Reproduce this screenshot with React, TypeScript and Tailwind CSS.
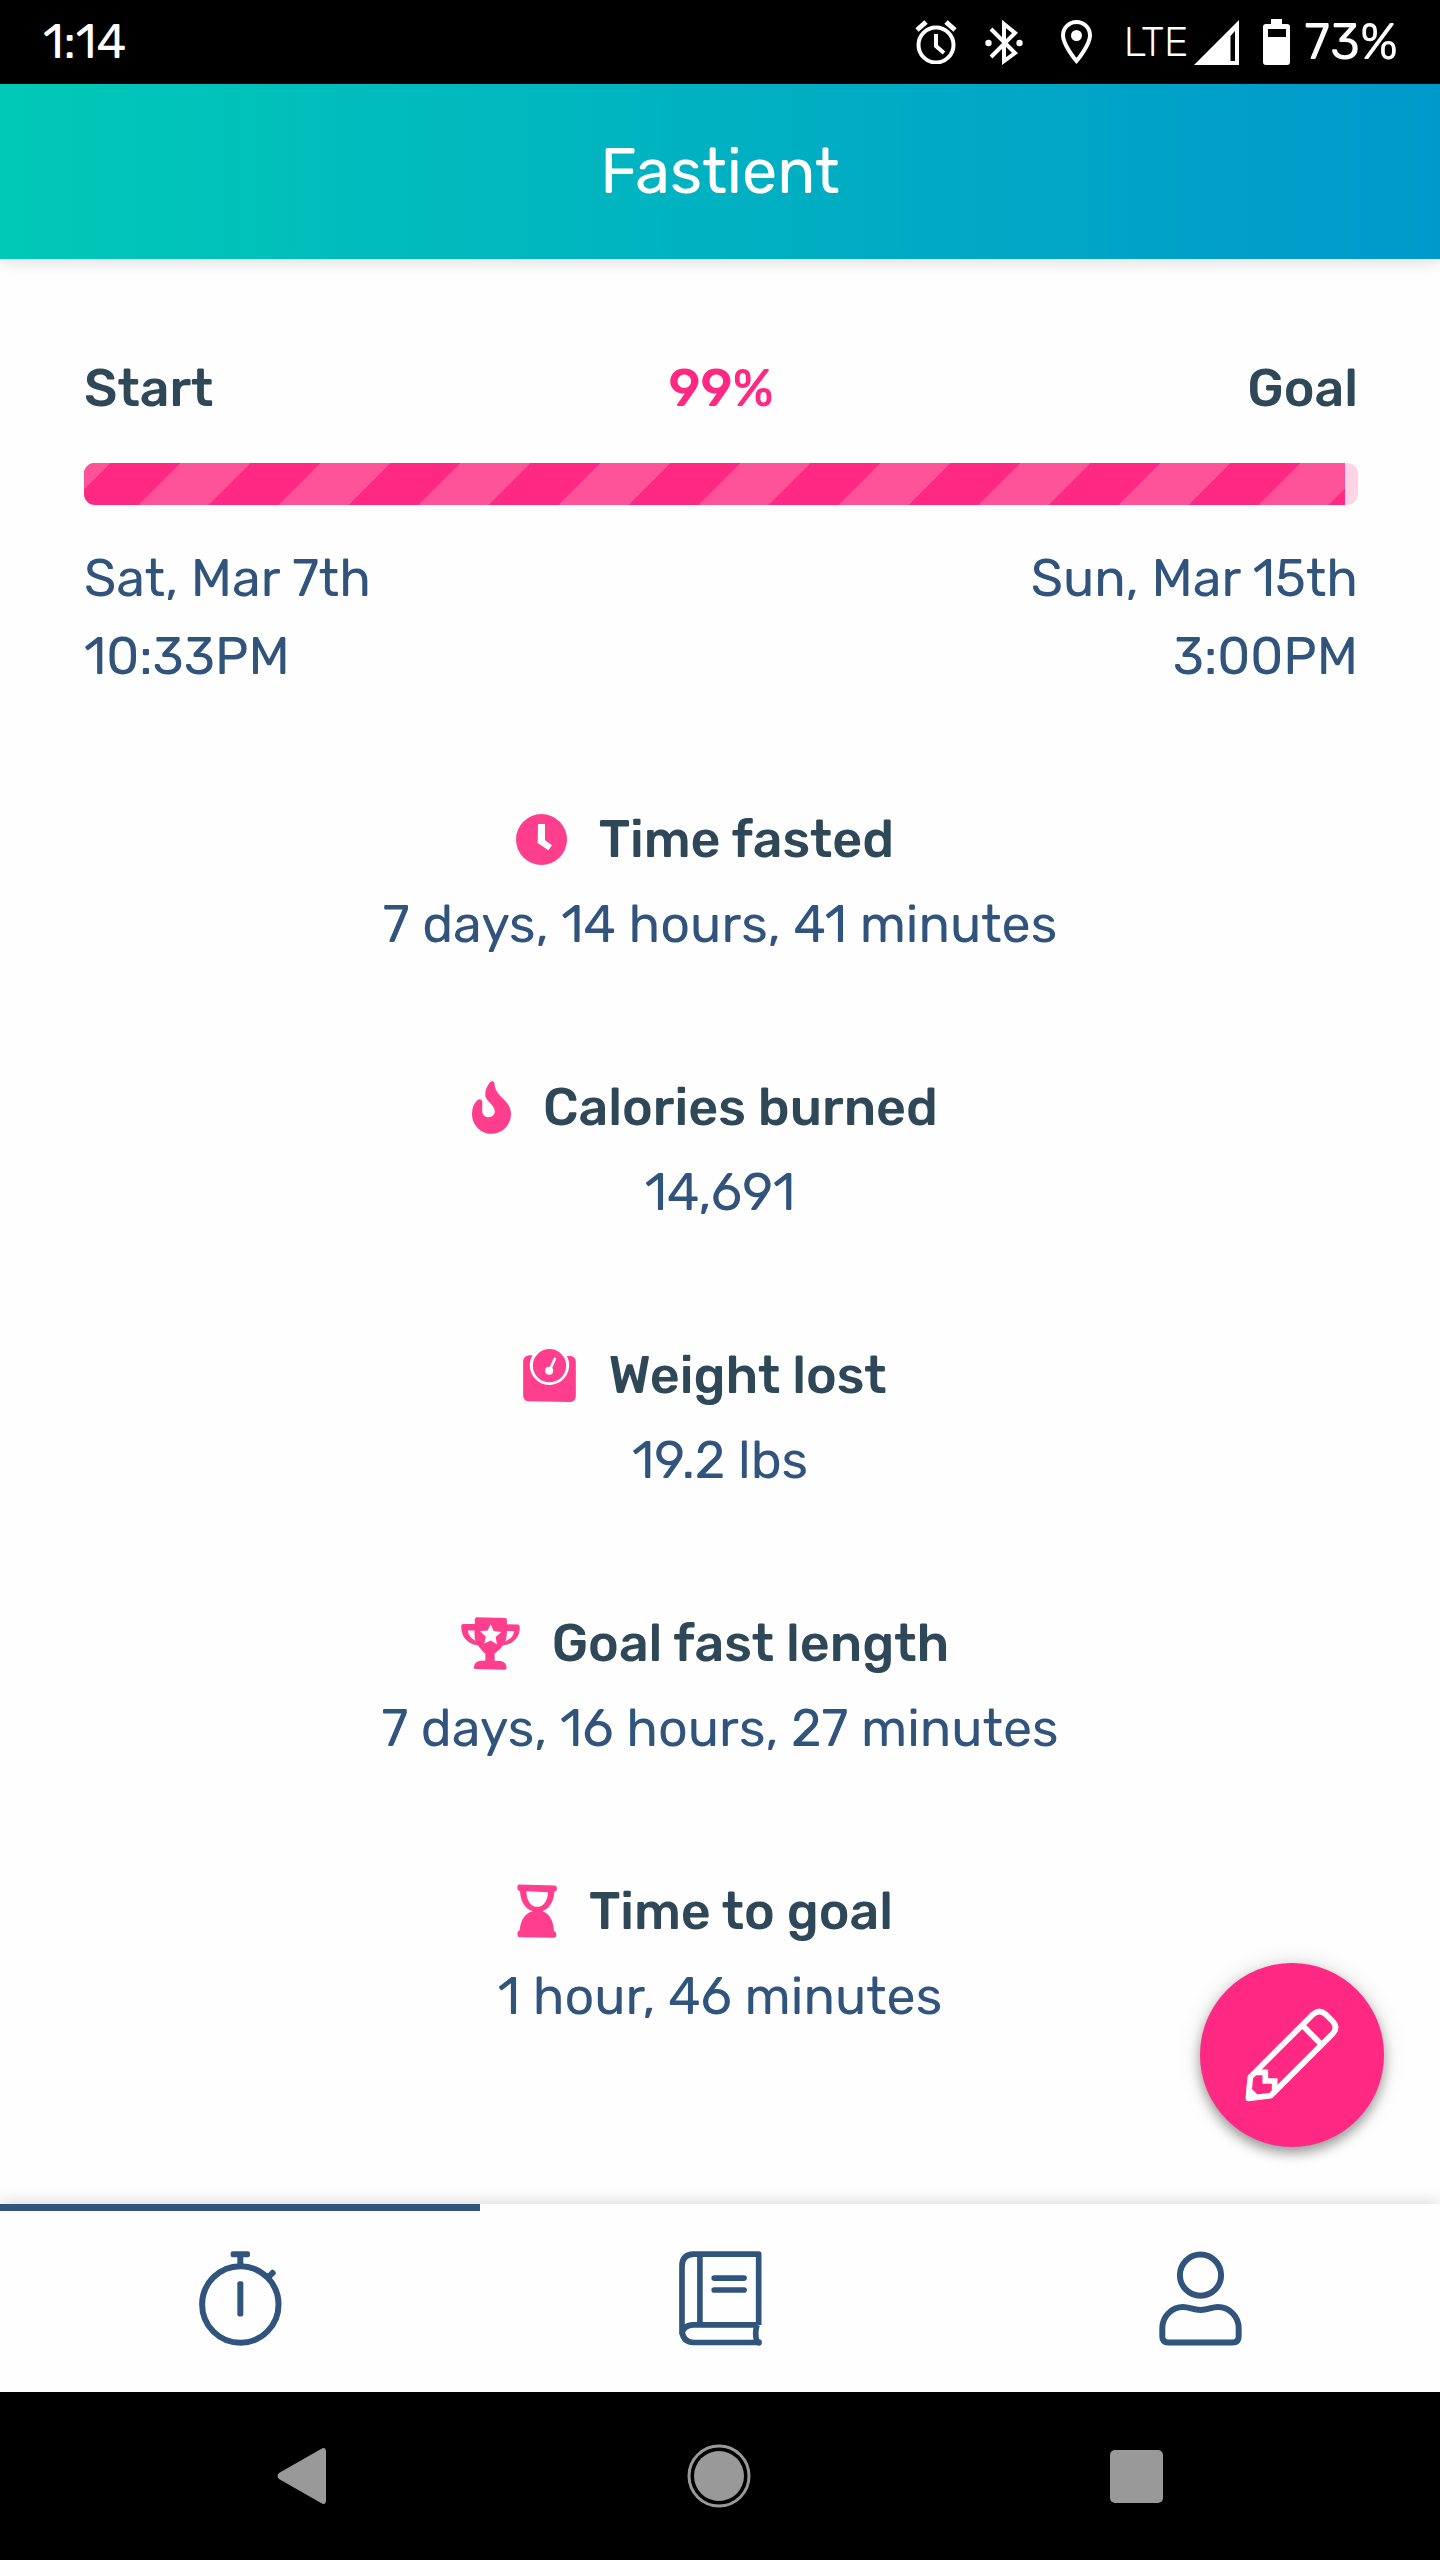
import type { ReactNode } from "react";

function StatusBar() {
  return (
    <div className="flex h-[84px] items-center bg-black pr-[42px] pl-[43px] text-white">
      <time className="flex-1 text-[48px] leading-[60px]">1:14</time>
      <svg className="h-[44px] w-[42px]" viewBox="0 0 42 44" fill="none" stroke="currentColor" aria-label="Alarm set">
        <circle cx="21" cy="25" r="17.5" strokeWidth="4" />
        <path d="M21 14V26L29 33" strokeWidth="4" />
        <path d="M2 10L11 2M40 10L31 2" strokeWidth="5" />
      </svg>
      <svg className="ml-[28px] h-[45px] w-[38px]" viewBox="0 0 38 45" fill="none" stroke="currentColor" aria-label="Bluetooth connected">
        <path d="M6 9L30 33L19 41V4L30 13L6 37" strokeWidth="4" />
        <circle cx="3.5" cy="23" r="3.2" fill="currentColor" stroke="none" />
        <circle cx="34.5" cy="23" r="3.2" fill="currentColor" stroke="none" />
      </svg>
      <svg className="ml-[38px] h-[45px] w-[31px]" viewBox="0 0 31 45" fill="none" stroke="currentColor" aria-label="Location">
        <path d="M15.5 2C8 2 2 8 2 15.500C2 25 15.500 41 15.500 41S29 25 29 15.500C29 8 23 2 15.500 2Z" strokeWidth="4" />
        <circle cx="15.5" cy="15.5" r="5.5" fill="currentColor" stroke="none" />
      </svg>
      <span className="ml-[32px] text-[41px] leading-[60px] font-light">LTE</span>
      <svg className="ml-[6px] h-[45px] w-[45px]" viewBox="0 0 45 45" fill="currentColor" aria-label="Mobile signal">
        <path fillRule="evenodd" d="M45 0V45H0ZM41 11L36.500 16V41H41Z" />
      </svg>
      <svg className="ml-[24px] h-[46px] w-[27px]" viewBox="0 0 27 46" fill="currentColor" aria-label="Battery">
        <path fillRule="evenodd" d="M8 0H19V5H24Q27 5 27 8V43Q27 46 24 46H3Q0 46 0 43V8Q0 5 3 5H8ZM5 10V18H23V10Z" />
      </svg>
      <span className="ml-[14px] text-[50px] leading-[60px]">73%</span>
    </div>
  );
}

function ClockIcon() {
  return (
    <svg className="size-[51px]" viewBox="0 0 153 153" fill="currentColor" aria-hidden="true">
      <circle cx="76.5" cy="76.500" r="76.500" />
      <path fill="white" d="M66 30H87V79L108 94L97 109L65 87Z" />
    </svg>
  );
}

function FlameIcon() {
  return (
    <svg className="h-[53px] w-[39px]" viewBox="0 0 118 159" fill="currentColor" aria-hidden="true">
      <path d="M68 7C68-1 59-2 54 4C43 17 38 34 41 48C45 61 69 74 69 91C69 101 61 109 50 109C39 109 31 101 31 90V63C31 53 20 52 15 59C5 68 0 82 0 99C0 132 26 159 59 159C92 159 118 132 118 99C118 55 70 50 68 7Z" />
    </svg>
  );
}

function ScaleIcon() {
  return (
    <svg className="size-[53px]" viewBox="0 0 158 159" fill="currentColor" aria-hidden="true">
      <path d="M28 19C10 18 0 24 0 38V138C0 151 7 157 19 157L138 159C151 159 158 152 158 140V40C158 25 150 20 131 21A59 59 0 1 1 28 19Z" />
      <circle cx="79" cy="50" r="50" />
      <circle cx="78" cy="65" r="12" fill="white" />
      <path d="M80 62L95 30" stroke="white" strokeWidth="8" strokeLinecap="round" />
    </svg>
  );
}

function TrophyIcon() {
  return (
    <svg className="h-[53px] w-[59px]" viewBox="0 0 177 160" fill="currentColor" aria-hidden="true">
      <path
        fillRule="evenodd"
        d="M47 1L132 3Q138 3 138 9V22L171 23Q177 24 177 31C177 62 157 82 126 86C119 97 108 104 101 111V132L119 133Q137 136 137 154Q137 159 132 159L43 157Q38 157 38 152Q40 134 58 132H73V111C66 104 57 96 51 86C20 82 0 62 0 27Q0 22 6 21H41V8Q42 1 47 1ZM20 41C22 56 30 66 43 72Q40 62 40 41ZM138 42Q138 63 133 73C150 66 158 57 160 42ZM89 22L98 42L121 45L104 60L108 82L89 71L70 80L74 59L57 43L80 41Z"
      />
    </svg>
  );
}

function HourglassIcon() {
  return (
    <svg className="h-[54px] w-[40px]" viewBox="0 0 120 161" fill="currentColor" aria-hidden="true">
      <path
        fillRule="evenodd"
        d="M6 1L114 4Q120 5 120 13Q120 22 112 23C111 52 96 75 76 81C97 88 110 109 111 141Q118 142 118 151Q118 161 112 161L6 159Q1 158 1 149Q1 140 8 139C10 109 23 87 47 81C24 74 11 52 9 22Q1 20 1 12Q1 2 6 1ZM28 21C29 49 41 68 60 68C79 68 92 51 93 24Z"
      />
    </svg>
  );
}

function PencilIcon() {
  return (
    <svg className="size-[94px]" viewBox="257 202 282 282" fill="none" stroke="currentColor" strokeWidth="17" aria-hidden="true">
      <path strokeLinejoin="round" d="M273 409L461 221Q480 204 499 221L520 242Q537 260 520 279L334 465L267 473Z" />
      <path d="M432 257L484 309M288 395H318V421H346V452" />
      <path fill="currentColor" stroke="none" d="M262 434L278 446L295 462L306 476L264 480Z" />
    </svg>
  );
}

function StopwatchIcon() {
  return (
    <svg className="h-[95px] w-[83px]" viewBox="117 212 249 286" fill="none" stroke="currentColor" strokeWidth="18" aria-hidden="true">
      <circle cx="241" cy="373" r="115" />
      <path d="M241 222V258M324 290L330 284" />
      <g fill="currentColor" stroke="none">
        <rect x="212" y="213" width="58" height="18" rx="6" />
        <rect x="232" y="303" width="18" height="106" rx="6" />
        <rect x="322" y="272" width="26" height="18" rx="6" transform="rotate(-45 335 281)" />
      </g>
    </svg>
  );
}

function BookIcon() {
  return (
    <svg className="h-[95px] w-[83px]" viewBox="119 93 250 285" fill="none" stroke="currentColor" strokeWidth="17" strokeLinejoin="round" aria-hidden="true">
      <path d="M359 315V102H163Q128 103 128 138V332Q130 367 163 368H359" />
      <path d="M182 102V315M356 315H163Q129 317 128 344M354 315Q346 341 354 368" />
      <path strokeLinecap="round" d="M225 174H315M225 210H315M360 367V369" />
    </svg>
  );
}

function PersonIcon() {
  return (
    <svg className="h-[95px] w-[83px]" viewBox="120 93 250 285" fill="none" stroke="currentColor" strokeWidth="18" aria-hidden="true">
      <circle cx="245" cy="165" r="62" />
      <path d="M130 325C130 290 158 261 193 261C212 261 222 270 245 270C268 270 278 261 297 261C332 261 360 290 360 325V350Q360 368 342 368H148Q130 368 130 350Z" />
    </svg>
  );
}

const stats: { label: string; value: string; icon: ReactNode }[] = [
  { label: "Time fasted", value: "7 days, 14 hours, 41 minutes", icon: <ClockIcon /> },
  { label: "Calories burned", value: "14,691", icon: <FlameIcon /> },
  { label: "Weight lost", value: "19.2 lbs", icon: <ScaleIcon /> },
  { label: "Goal fast length", value: "7 days, 16 hours, 27 minutes", icon: <TrophyIcon /> },
  { label: "Time to goal", value: "1 hour, 46 minutes", icon: <HourglassIcon /> },
];

const tabs: { label: string; icon: ReactNode; active: boolean }[] = [
  { label: "Timer", icon: <StopwatchIcon />, active: true },
  { label: "Journal", icon: <BookIcon />, active: false },
  { label: "Profile", icon: <PersonIcon />, active: false },
];

function FastProgress({ percent }: { percent: number }) {
  return (
    <section className="pr-[82px] pl-[84px]">
      <div className="grid grid-cols-3 font-medium text-[#2f4858]">
        <span>Start</span>
        <span className="text-center text-[#ff2882]">{percent}%</span>
        <span className="text-right">Goal</span>
      </div>
      <div
        className="mt-[36px] h-[42px] overflow-hidden rounded-[11px] bg-[#ffd3e6]"
        role="progressbar"
        aria-label="Fast progress"
        aria-valuenow={percent}
        aria-valuemin={0}
        aria-valuemax={100}
      >
        <div
          className="h-full bg-[#ff2882] bg-[linear-gradient(135deg,#ff5399_25%,transparent_25%,transparent_50%,#ff5399_50%,#ff5399_75%,transparent_75%)] bg-[length:140px_140px] bg-[position:-44px_0px]"
          style={{ width: `${percent}%` }}
        />
      </div>
      <div className="mt-[34px] flex justify-between">
        <p>
          Sat, Mar 7th
          <br />
          10:33PM
        </p>
        <p className="text-right">
          Sun, Mar 15th
          <br />
          3:00PM
        </p>
      </div>
    </section>
  );
}

export default function App() {
  return (
    <div className="flex min-h-screen flex-col bg-[#fefefe] font-['Rubik','Roboto',sans-serif]">
      <StatusBar />
      <header className="flex h-[175px] items-center justify-center bg-[linear-gradient(90deg,#00c9b7,#0099cc)] shadow-[0_4px_14px_rgba(0,0,0,0.12)]">
        <h1 className="text-[63px] leading-[78px] text-white">Fastient</h1>
      </header>

      <main className="relative flex-1 pt-[90px] text-[52px] leading-[78px] text-[#31547d]">
        <FastProgress percent={99} />
        <div className="mt-[105px] flex flex-col gap-[105px]">
          {stats.map((stat) => (
            <section key={stat.label} className="flex flex-col items-center gap-[7px]">
              <h2 className="flex items-center gap-[32px] pr-[30px] font-medium text-[#2f4858]">
                <span className="text-[#ff3f8e]">{stat.icon}</span>
                {stat.label}
              </h2>
              <p>{stat.value}</p>
            </section>
          ))}
        </div>
        <button
          type="button"
          aria-label="Edit fast"
          className="absolute right-[56px] bottom-[57px] flex size-[184px] items-center justify-center rounded-full bg-[#ff2882] text-white shadow-[0_6px_12px_rgba(0,0,0,0.35),0_0_24px_rgba(0,0,0,0.12)]"
        >
          <PencilIcon />
        </button>
      </main>

      <nav className="grid h-[188px] grid-cols-3 bg-[#fefefe] text-[#31547d] shadow-[0_-4px_14px_rgba(0,0,0,0.12)]">
        {tabs.map((tab) => (
          <button
            key={tab.label}
            type="button"
            aria-label={tab.label}
            aria-current={tab.active ? "page" : undefined}
            className={
              tab.active
                ? "flex items-center justify-center bg-[linear-gradient(#31547d,#31547d)] bg-[length:100%_7px] bg-no-repeat"
                : "flex items-center justify-center"
            }
          >
            {tab.icon}
          </button>
        ))}
      </nav>

      <div className="z-10 grid h-[168px] grid-cols-3 bg-black pr-[95px] pl-[93px] text-[#999999]">
        <button type="button" aria-label="Back" className="flex items-center justify-center">
          <svg className="h-[58px] w-[50px]" viewBox="0 0 50 58" fill="currentColor">
            <path d="M2 26L44 2Q49-1 49 5V53Q49 59 44 56L2 32Q-1 29 2 26Z" />
          </svg>
        </button>
        <button type="button" aria-label="Home" className="flex items-center justify-center">
          <svg className="size-[64px]" viewBox="0 0 64 64" fill="currentColor">
            <circle cx="32" cy="32" r="25" />
            <circle cx="32" cy="32" r="30" fill="none" stroke="currentColor" strokeWidth="3" />
          </svg>
        </button>
        <button type="button" aria-label="Recent apps" className="flex items-center justify-center">
          <span className="size-[53px] rounded-[5px] bg-[#999999]" />
        </button>
      </div>
    </div>
  );
}
